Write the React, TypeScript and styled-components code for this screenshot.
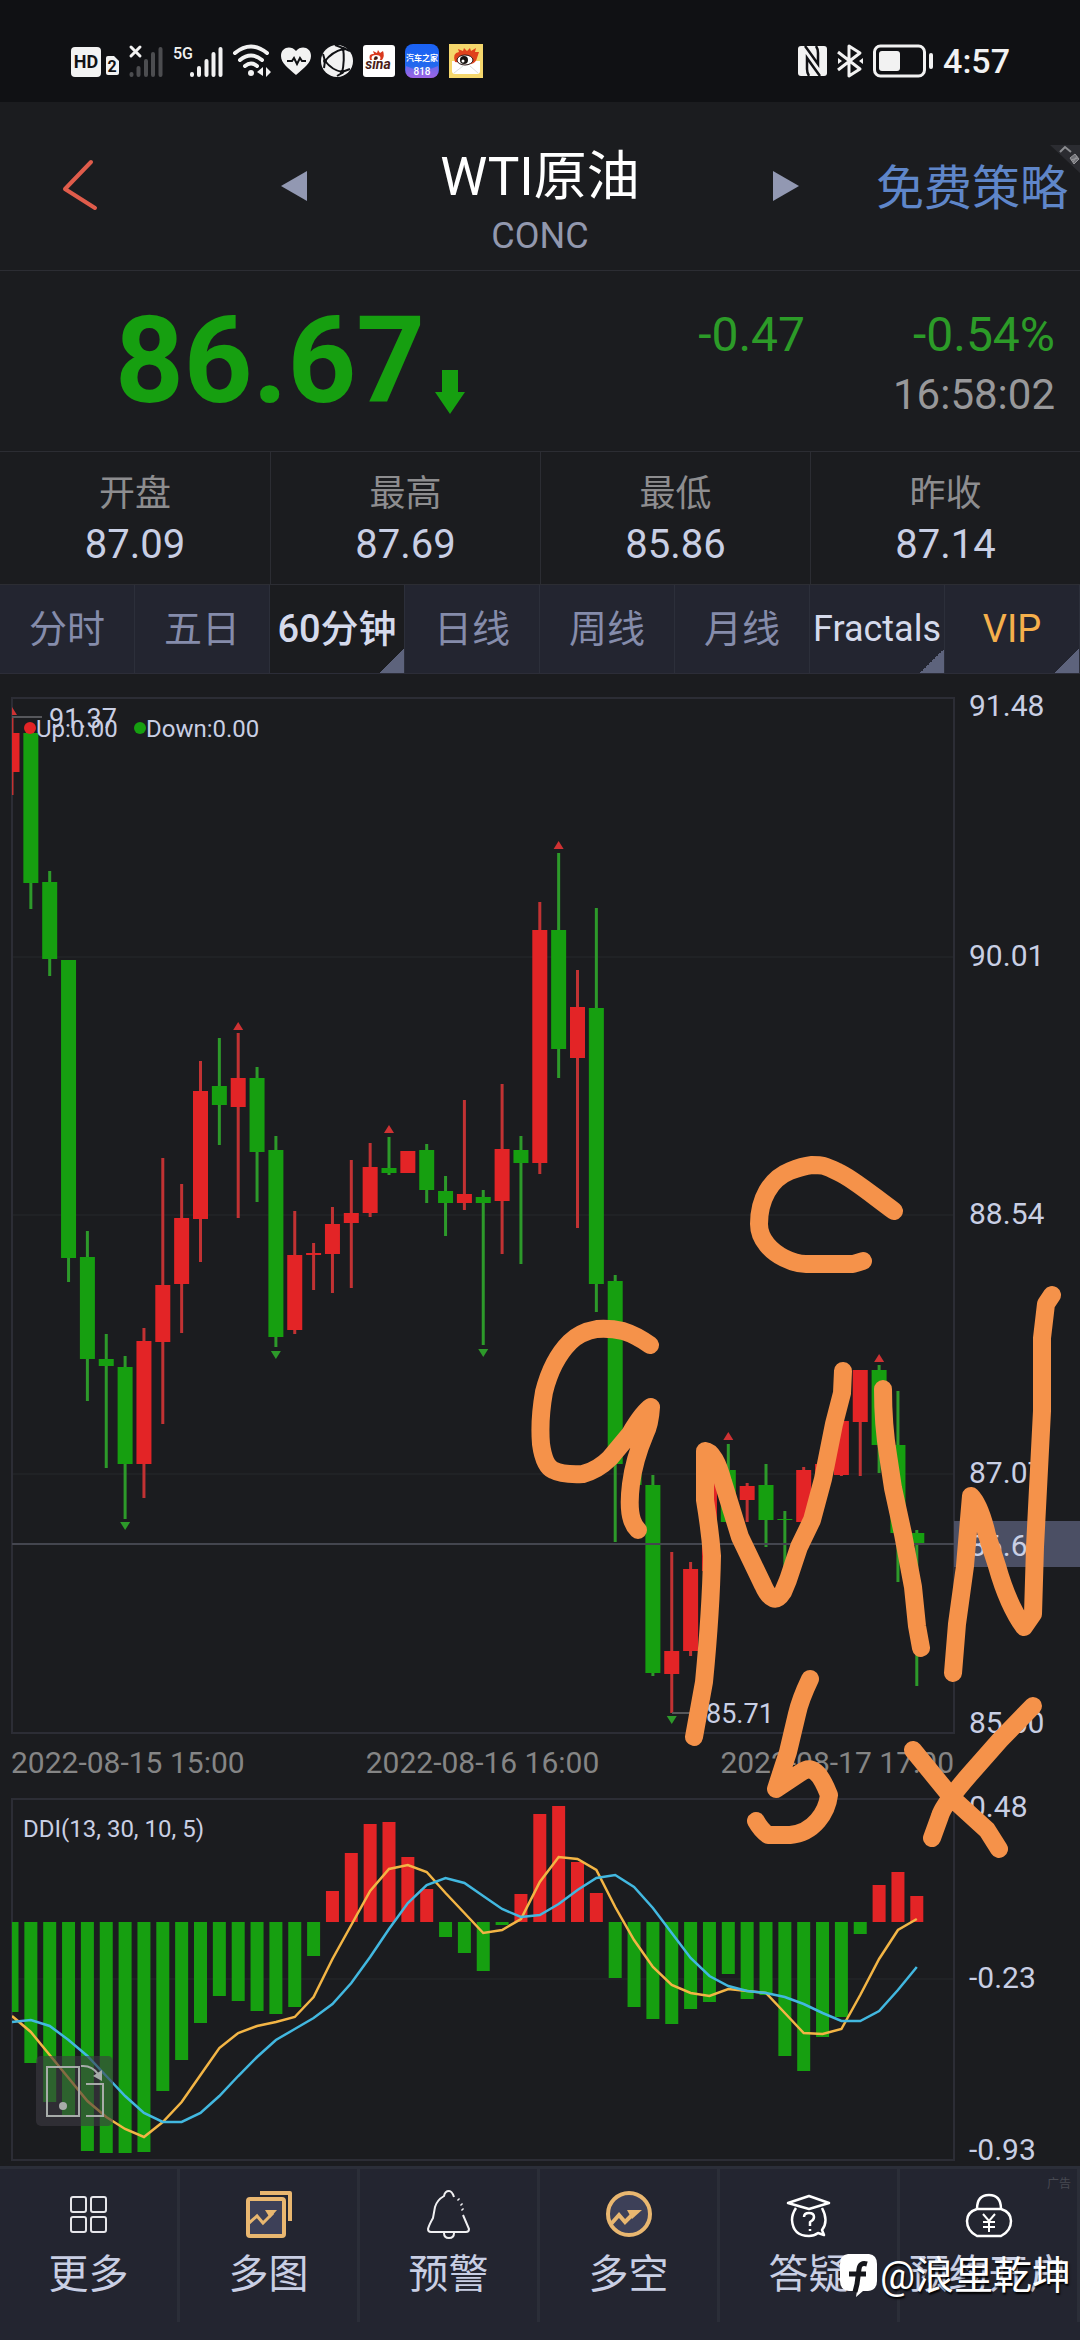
import styled, { createGlobalStyle } from "styled-components";

type Side = "up" | "down";
type Candle = [side: Side, high: number, top: number, bottom: number, low: number];
type Bar = [side: Side, end: number];

const UP = "#e32426";
const DOWN = "#169f10";
const STEP = 18.85;
const LEFT = 12;
const RIGHT = 954;
const ZERO = 1922;

const at = (index: number) => LEFT + index * STEP;

const candles: Candle[] = [
  ["up", 717, 733, 772, 795],
  ["down", 733, 733, 883, 909],
  ["down", 871, 882, 959, 976],
  ["down", 960, 960, 1258, 1282],
  ["down", 1231, 1257, 1359, 1401],
  ["down", 1334, 1359, 1366, 1468],
  ["down", 1356, 1367, 1464, 1519],
  ["up", 1328, 1341, 1464, 1498],
  ["up", 1158, 1285, 1342, 1424],
  ["up", 1184, 1218, 1284, 1333],
  ["up", 1061, 1091, 1219, 1262],
  ["down", 1038, 1086, 1105, 1145],
  ["up", 1033, 1078, 1107, 1218],
  ["down", 1067, 1078, 1152, 1202],
  ["down", 1136, 1150, 1337, 1347],
  ["up", 1211, 1255, 1330, 1334],
  ["up", 1243, 1253, 1255, 1290],
  ["up", 1207, 1224, 1254, 1293],
  ["up", 1160, 1213, 1223, 1288],
  ["up", 1143, 1167, 1213, 1217],
  ["down", 1137, 1168, 1173, 1175],
  ["up", 1151, 1151, 1173, 1173],
  ["down", 1144, 1150, 1190, 1203],
  ["down", 1176, 1191, 1203, 1236],
  ["up", 1100, 1194, 1203, 1210],
  ["down", 1190, 1197, 1203, 1345],
  ["up", 1084, 1149, 1201, 1254],
  ["down", 1136, 1150, 1163, 1264],
  ["up", 902, 930, 1163, 1174],
  ["down", 853, 930, 1049, 1078],
  ["up", 970, 1007, 1058, 1228],
  ["down", 908, 1008, 1284, 1312],
  ["down", 1275, 1281, 1464, 1542],
  ["down", 1440, 1464, 1485, 1490],
  ["down", 1475, 1485, 1673, 1676],
  ["up", 1552, 1651, 1674, 1713],
  ["up", 1562, 1569, 1651, 1656],
  ["up", 1483, 1483, 1571, 1571],
  ["down", 1444, 1470, 1522, 1522],
  ["up", 1483, 1486, 1500, 1522],
  ["down", 1464, 1485, 1520, 1547],
  ["down", 1511, 1519, 1520, 1570],
  ["up", 1467, 1470, 1522, 1522],
  ["up", 1464, 1464, 1476, 1476],
  ["up", 1421, 1421, 1475, 1476],
  ["up", 1370, 1370, 1422, 1476],
  ["down", 1365, 1370, 1445, 1473],
  ["down", 1391, 1445, 1533, 1582],
  ["down", 1530, 1533, 1544, 1686],
];

const peaks: [number, number][] = [
  [0, 711],
  [12, 1026],
  [20, 1129],
  [29, 845],
  [38, 1436],
  [46, 1358],
];
const valleys: [number, number][] = [
  [6, 1526],
  [14, 1355],
  [25, 1353],
  [35, 1720],
];

const bars: Bar[] = [
  ["down", 2012], ["down", 2063], ["down", 2102], ["down", 2117], ["down", 2151], ["down", 2153], ["down", 2153],
  ["down", 2152], ["down", 2091], ["down", 2060], ["down", 2023], ["down", 1996], ["down", 2001], ["down", 2011],
  ["down", 2014], ["down", 2007], ["down", 1956], ["up", 1891], ["up", 1853], ["up", 1824], ["up", 1822],
  ["up", 1857], ["up", 1889], ["down", 1937], ["down", 1953], ["down", 1971], ["down", 1925], ["up", 1894],
  ["up", 1814], ["up", 1806], ["up", 1862], ["up", 1893], ["down", 1978], ["down", 2007], ["down", 2019],
  ["down", 2024], ["down", 2009], ["down", 2002], ["down", 1974], ["down", 1999], ["down", 1995], ["down", 2056],
  ["down", 2071], ["down", 2037], ["down", 2017], ["down", 1934], ["up", 1885], ["up", 1872], ["up", 1896],
];

const fastLine = [
  2016, 2032, 2055, 2078, 2101, 2117, 2129, 2137, 2122, 2102, 2075, 2048, 2033, 2026, 2022, 2017, 1997, 1959, 1925,
  1891, 1869, 1865, 1872, 1893, 1913, 1933, 1930, 1919, 1882, 1857, 1859, 1870, 1907, 1940, 1967, 1985, 1993, 1996,
  1989, 1991, 1993, 2013, 2033, 2034, 2029, 1995, 1959, 1930, 1919,
];
const slowLine = [
  2022, 2020, 2026, 2040, 2056, 2076, 2096, 2113, 2122, 2122, 2113, 2096, 2076, 2057, 2040, 2029, 2018, 2004, 1983,
  1957, 1929, 1903, 1885, 1878, 1883, 1896, 1909, 1917, 1915, 1904, 1890, 1878, 1875, 1887, 1908, 1933, 1958, 1976,
  1986, 1991, 1993, 1997, 2004, 2013, 2021, 2021, 2011, 1990, 1967,
];

const toPoints = (line: number[]) => line.map((y, i) => `${at(i)},${y}`).join(" ");

const priceTicks = [
  { label: "91.48", y: 705 },
  { label: "90.01", y: 955 },
  { label: "88.54", y: 1213 },
  { label: "87.07", y: 1472 },
  { label: "85.60", y: 1722 },
];
const ddiTicks = [
  { label: "0.48", y: 1806 },
  { label: "-0.23", y: 1977 },
  { label: "-0.93", y: 2149 },
];

const strokes = [
  "M894 1211C872 1195 852 1178 838 1172C824 1165 822 1165 812 1165C804 1166 800 1167 790 1171C770 1179 759 1200 759 1224C759 1240 772 1252 784 1258Q796 1264 806 1264H853L863 1261",
  "M650 1345Q636 1335 623 1331Q610 1328 597 1329Q580 1332 570 1342Q552 1360 544 1392Q539 1420 541 1444Q544 1466 553 1470Q562 1475 583 1474Q598 1470 610 1458L630 1434Q643 1412 651 1407Q650 1424 645 1434Q634 1460 631 1484Q628 1508 632 1520Q634 1526 638 1530",
  "M694 1737L704 1682Q711 1610 712 1556Q710 1530 705 1500V1451Q715 1452 723 1482L740 1537L763 1585Q773 1608 783 1592L788 1580L799 1547L812 1520L823 1479L834 1424L842 1393L843 1371",
  "M883 1389Q883 1425 888 1455L893 1488L903 1534L913 1587L917 1626L921 1648",
  "M953 1673L957 1624L965 1566L971 1496Q980 1505 987 1535L997 1566Q1008 1605 1024 1627L1033 1614L1035 1547L1042 1411V1338L1046 1304L1052 1295",
  "M810 1679Q800 1700 797 1714L788 1752L776 1789L800 1773C812 1764 820 1772 829 1795C827 1812 814 1833 790 1835H768Q761 1830 756 1821",
  "M1033 1706L1000 1740L970 1774Q943 1805 940 1816L932 1838M913 1750L953 1799L987 1830L999 1849",
];

const stats = [
  { label: "开盘", value: "87.09" },
  { label: "最高", value: "87.69" },
  { label: "最低", value: "85.86" },
  { label: "昨收", value: "87.14" },
];

const tabs = [
  { label: "分时" },
  { label: "五日" },
  { label: "60分钟", active: true, more: true },
  { label: "日线" },
  { label: "周线" },
  { label: "月线" },
  { label: "Fractals", tone: "#d5daec", size: 36, more: true },
  { label: "VIP", tone: "#f5b04c", more: true },
];

const StatusIcons = () => (
  <S.StatusGroup>
    <svg width="48" height="34" viewBox="0 0 48 34">
      <rect x="0" y="3" width="30" height="30" rx="4" fill="#f2f2f2" />
      <text x="15" y="24" fontSize="18" fontWeight="700" textAnchor="middle" fill="#101114">
        HD
      </text>
      <path d="M35 14q0-2 2-2h6l5 5v12q0 2-2 2h-9q-2 0-2-2z" fill="#f2f2f2" />
      <text x="41" y="28" fontSize="16" fontWeight="700" textAnchor="middle" fill="#101114">
        2
      </text>
    </svg>
    <svg width="34" height="34" viewBox="0 0 34 34" strokeLinecap="round">
      <path d="M2 3l9 9M11 3l-9 9" stroke="#f2f2f2" strokeWidth="3" />
      <path d="M2.500 30v1M9.500 24v7M17 17v14M24 10v21M31.500 5v26" stroke="#4c4d50" strokeWidth="4" />
    </svg>
    <svg width="50" height="34" viewBox="0 0 50 34" strokeLinecap="round">
      <text x="0" y="15" fontSize="16" fontWeight="500" fill="#f2f2f2">
        5G
      </text>
      <path d="M19 30v1M26 24v7M33.500 17v14M40.500 10v21M47.500 5v26" stroke="#f2f2f2" strokeWidth="4" />
    </svg>
    <svg width="38" height="34" viewBox="0 0 38 34" fill="none" stroke="#f2f2f2" strokeWidth="4" strokeLinecap="round">
      <path d="M2 9Q18-4 34 9M7 16Q18 7 29 16M12 22Q18 17 24 22" />
      <circle cx="18" cy="29" r="3" fill="#f2f2f2" stroke="none" />
      <path d="M30 23v9l-6-4zM33 23v10l5-5z" fill="#f2f2f2" stroke="none" />
    </svg>
    <svg width="30" height="30" viewBox="0 0 30 30">
      <path d="M15 29C7 22 0 17 0 10 0 1 10-1 15 5 20-1 30 1 30 10 30 17 23 22 15 29z" fill="#f2f2f2" />
      <path d="M6 15h5l2-3 3 6 3-6 2 3h4" fill="none" stroke="#101114" strokeWidth="2" />
    </svg>
    <svg width="32" height="34" viewBox="0 0 32 34">
      <circle cx="16" cy="17" r="16" fill="#f2f2f2" />
      <path
        d="M14 1L22 4Q24 16 21 29L16 32M22 4L29 7M22 5Q11 8 4 17M4 17Q11 26 21 28M4 17L2 10M4 17L3 24M21 28L29 25"
        fill="none"
        stroke="#101114"
        strokeWidth="2"
      />
      <circle cx="22" cy="5" r="2" fill="#101114" />
      <circle cx="4" cy="17" r="2" fill="#101114" />
      <circle cx="21" cy="28" r="2" fill="#101114" />
    </svg>
    <svg width="32" height="34" viewBox="0 0 32 34">
      <rect y="1" width="32" height="32" rx="3" fill="#fff" />
      <path d="M7 16Q5 9 11 10L10 7 14 9 15 6 17 9 20 7Q22 12 19 16Z" fill="#d9391e" />
      <ellipse cx="13" cy="14" rx="4.500" ry="3" fill="#fff" />
      <circle cx="13" cy="14" r="1.800" fill="#3b1a14" />
      <text x="15" y="25" fontSize="14" fontWeight="700" fontStyle="italic" textAnchor="middle" fill="#4a1d18">
        sina
      </text>
    </svg>
    <svg width="34" height="34" viewBox="0 0 34 34">
      <defs>
        <linearGradient id="auto" x1="0" y1="0" x2="0" y2="1">
          <stop offset="0" stopColor="#1a62f5" />
          <stop offset="0.650" stopColor="#2369ee" />
          <stop offset="1" stopColor="#9a5ae0" />
        </linearGradient>
      </defs>
      <rect width="34" height="34" rx="8" fill="url(#auto)" />
      <path d="M1 22l10 4h12l10-4v5q0 7-8 7H9q-8 0-8-7z" fill="#a06ae8" opacity="0.600" />
      <text x="17" y="17" fontSize="8" fontWeight="700" textAnchor="middle" fill="#fff">
        汽车之家
      </text>
      <text x="17" y="31" fontSize="10" fontWeight="500" textAnchor="middle" fill="#fff">
        818
      </text>
    </svg>
    <svg width="34" height="34" viewBox="0 0 34 34">
      <rect width="34" height="34" fill="#f5d76c" />
      <path d="M3 17h28v10q0 3-3 3H6q-3 0-3-3z" fill="#fff" />
      <path d="M6 18Q3 9 10 8L9 5 14 7 15 4 18 7 21 4 22 7 27 4 26 8 30 8 28 14Q27 19 22 20z" fill="#e0421c" />
      <ellipse cx="16" cy="16" rx="8" ry="5" fill="#fff" stroke="#2a1512" />
      <circle cx="15" cy="16" r="4" fill="#16120f" />
      <circle cx="14" cy="17" r="1.500" fill="#fff" />
      <path d="M5 29l9-7M29 29l-8-7" stroke="#ddd" fill="none" />
    </svg>
  </S.StatusGroup>
);

const DeviceIcons = () => (
  <S.DeviceGroup>
    <svg width="29" height="30" viewBox="0 0 29 30" fill="none">
      <rect width="29" height="30" rx="3" fill="#f2f2f2" />
      <path d="M7 0Q10 4 20 18V7Q20 3 18 0M22 30Q19 26 9 12V23Q9 27 11 30" stroke="#101114" strokeWidth="2.500" />
    </svg>
    <svg width="26" height="34" viewBox="0 0 26 34" fill="none" stroke="#f2f2f2" strokeWidth="3">
      <path d="M1 8l22 17-11 7V2l11 7L1 26" strokeLinejoin="round" />
      <path d="M1 14v6l4-3zM26 14v6l-4-3z" fill="#f2f2f2" stroke="none" />
    </svg>
    <svg width="60" height="34" viewBox="0 0 60 34">
      <rect x="1.500" y="2" width="50" height="30" rx="6" fill="none" stroke="#f2f2f2" strokeWidth="3" />
      <rect x="6" y="7" width="21" height="20" rx="3" fill="#f2f2f2" />
      <rect x="56" y="9" width="4" height="16" rx="2" fill="#f2f2f2" />
    </svg>
    <S.Clock>4:57</S.Clock>
  </S.DeviceGroup>
);

const navItems = [
  {
    label: "更多",
    icon: (
      <g stroke="#e6e6ea" strokeWidth="2" fill="none">
        <rect x="6" y="7" width="15" height="15" rx="2" />
        <rect x="26" y="7" width="15" height="15" rx="2" />
        <rect x="6" y="27" width="15" height="15" rx="2" />
        <rect x="26" y="27" width="15" height="15" rx="2" />
      </g>
    ),
  },
  {
    label: "多图",
    icon: (
      <g stroke="#e9b770" fill="none" strokeWidth="4">
        <path d="M15 3H45V31" strokeLinejoin="round" />
        <rect x="3" y="9" width="36" height="37" rx="2" fill="#3d4058" />
        <path d="M4 33L12 26L18 33L28 23" strokeWidth="3" />
        <path d="M20 20H32L25 28z" fill="#e9b770" stroke="none" />
      </g>
    ),
  },
  {
    label: "预警",
    icon: (
      <g stroke="#f0f0f2" fill="none" strokeWidth="2">
        <path d="M29 7Q27 1 24 1Q20 1 19 6Q12 10 10 17L8 28Q4 35 3 39Q3 42 6 42H41Q44 42 44 39L38 25" />
        <path d="M19 43q0 5 5 5t5-5" />
        <path d="M33 9l1 1M36 14l1 1M37 19l1 1" strokeWidth="3" />
      </g>
    ),
  },
  {
    label: "多空",
    icon: (
      <g stroke="#e9b770" fill="none">
        <circle cx="24" cy="24" r="21" strokeWidth="4" fill="#3d4058" />
        <path d="M6 34L14 25L20 32L30 22" strokeWidth="4" />
        <path d="M22 20H37L27 29z" fill="#e9b770" stroke="none" />
      </g>
    ),
  },
  {
    label: "答疑",
    icon: (
      <g stroke="#fff" fill="none" strokeWidth="2.500" strokeLinejoin="round">
        <path d="M3 13L24 6L44 13L24 19z" />
        <path d="M11 18Q7 24 7 30Q8 46 24 46Q29 46 33 43L39 45L37 40Q44 31 37 18" />
        <path d="M19 27Q19 23 24 23Q29 23 29 27Q29 30 25 32V36M25 39v2" />
      </g>
    ),
  },
  {
    label: "预约开户",
    icon: (
      <g stroke="#fff" fill="none" strokeWidth="2.500">
        <path d="M12 19Q12 5 24 5Q36 5 36 19" />
        <path d="M12 19H36Q46 22 46 31Q46 41 36 46H12Q2 41 2 31Q2 22 12 19z" />
        <path d="M18 24L24 31L30 24M24 31V42M18 32H30M18 37H30" strokeWidth="2" />
      </g>
    ),
  },
];

const PriceChart = () => (
  <S.Chart viewBox="0 674 1080 1061" role="img" aria-label="WTI原油 60分钟">
    <defs>
      <clipPath id="price-plot">
        <rect x={LEFT} y="698" width={RIGHT - LEFT} height="1035" />
      </clipPath>
    </defs>
    <path d="M12 957H954M12 1215H954M12 1474H954" stroke="#27282c" />
    <rect x={LEFT} y="698" width={RIGHT - LEFT} height="1035" fill="none" stroke="#2c2d35" strokeWidth="2" />
    <g clipPath="url(#price-plot)">
      {candles.map(([side, high, top, bottom, low], i) => (
        <g key={i} fill={side === "up" ? UP : DOWN}>
          <rect x={at(i) - 1.5} y={high} width="3" height={low - high} fill={side === "up" ? "#c23233" : "#2d9a2a"} />
          <rect x={at(i) - 7.5} y={top} width="15" height={bottom - top} />
        </g>
      ))}
      {peaks.map(([i, y]) => (
        <path key={i} d={`M${at(i)} ${y - 4}l5 8h-10z`} fill="#cf3233" />
      ))}
      {valleys.map(([i, y]) => (
        <path key={i} d={`M${at(i)} ${y + 4}l5-8h-10z`} fill="#2d9a2a" />
      ))}
    </g>
    <path d="M12 717H42M672 1713H704" stroke="#56575b" strokeWidth="2" />
    <path d="M12 1544H954" stroke="#44464f" strokeWidth="2" />
    <g fontSize="27" fill="#c9cfe4">
      <text x="49" y="728">
        91.37
      </text>
      <text x="706" y="1723">
        85.71
      </text>
    </g>
    <g fontSize="24" fill="#c9cfe4">
      <circle cx="30" cy="728" r="6" fill={UP} />
      <text x="36" y="737">
        Up:0.00
      </text>
      <circle cx="140" cy="728" r="6" fill={DOWN} />
      <text x="146" y="737">
        Down:0.00
      </text>
    </g>
    <rect x={RIGHT} y="1521" width="126" height="46" fill="#4b4f64" />
    <g fontSize="30" fill="#c9cfe4">
      {priceTicks.map((tick) => (
        <text key={tick.label} x="969" y={tick.y + 11}>
          {tick.label}
        </text>
      ))}
      <text x="969" y="1556">
        86.67
      </text>
    </g>
  </S.Chart>
);

const DdiChart = () => (
  <S.Chart viewBox="0 1797 1080 369" role="img" aria-label="DDI">
    <defs>
      <clipPath id="ddi-plot">
        <rect x={LEFT} y="1799" width={RIGHT - LEFT} height="361" />
      </clipPath>
    </defs>
    <path d="M12 1979H954" stroke="#27282c" />
    <rect x={LEFT} y="1799" width={RIGHT - LEFT} height="361" fill="none" stroke="#2c2d35" strokeWidth="2" />
    <g clipPath="url(#ddi-plot)">
      {bars.map(([side, end], i) => (
        <rect
          key={i}
          x={at(i) - 6.5}
          y={Math.min(end, ZERO)}
          width="13"
          height={Math.abs(end - ZERO)}
          fill={side === "up" ? UP : DOWN}
        />
      ))}
      <polyline points={toPoints(fastLine)} fill="none" stroke="#f3b545" strokeWidth="2.500" />
      <polyline points={toPoints(slowLine)} fill="none" stroke="#42b8e0" strokeWidth="2.500" />
    </g>
    <text x="23" y="1837" fontSize="24" fill="#c9cfe4">
      DDI(13, 30, 10, 5)
    </text>
    <g fontSize="30" fill="#c9cfe4">
      {ddiTicks.map((tick) => (
        <text key={tick.label} x="969" y={tick.y + 11}>
          {tick.label}
        </text>
      ))}
    </g>
  </S.Chart>
);

const App = () => {
  return (
    <S.Page>
      <GlobalStyle />
      <S.StatusBar>
        <StatusIcons />
        <DeviceIcons />
      </S.StatusBar>

      <S.Header>
        <S.HeaderSide $left={60} $right={0}>
          <S.IconButton aria-label="返回">
            <svg width="40" height="54" viewBox="0 0 40 54" fill="none" stroke="#e05c4b" strokeWidth="4">
              <path d="M31 3L5 30L35 49" strokeLinecap="round" strokeLinejoin="round" />
            </svg>
          </S.IconButton>
          <S.IconButton aria-label="上一个">
            <svg width="26" height="30" viewBox="0 0 26 30" fill="#9298b2">
              <path d="M26 0V30L0 15z" />
            </svg>
          </S.IconButton>
        </S.HeaderSide>
        <S.TitleBlock>
          <S.Title>WTI原油</S.Title>
          <S.Symbol>CONC</S.Symbol>
        </S.TitleBlock>
        <S.HeaderSide $left={0} $right={12}>
          <S.IconButton aria-label="下一个">
            <svg width="26" height="30" viewBox="0 0 26 30" fill="#9298b2">
              <path d="M0 0V30L26 15z" />
            </svg>
          </S.IconButton>
          <S.StrategyLink href="#strategy">免费策略</S.StrategyLink>
        </S.HeaderSide>
        <S.CornerMark width="30" height="28" viewBox="0 0 30 28" aria-hidden="true">
          <path d="M0 0H30V28z" fill="#2b2c31" />
          <path d="M10 7l5-5 6 5" fill="none" stroke="#8b8c90" strokeWidth="2" />
          <path d="M20 13l5-4 4 5-5 5zM21 15l7-2M23 17l4-6" fill="#707176" stroke="#98989c" />
        </S.CornerMark>
      </S.Header>

      <S.Quote>
        <S.PriceBox>
          <S.Price>86.67</S.Price>
          <S.DownArrow width="30" height="44" viewBox="0 0 30 44">
            <path d="M7 0H23V22H30L15 44L0 22H7z" fill={DOWN} />
          </S.DownArrow>
        </S.PriceBox>
        <S.Changes>
          <S.Change>-0.47</S.Change>
          <S.ChangeColumn>
            <S.Change>-0.54%</S.Change>
            <S.Time>16:58:02</S.Time>
          </S.ChangeColumn>
        </S.Changes>
      </S.Quote>

      <S.Stats>
        {stats.map((stat) => (
          <S.Stat key={stat.label}>
            <S.StatLabel>{stat.label}</S.StatLabel>
            <S.StatValue>{stat.value}</S.StatValue>
          </S.Stat>
        ))}
      </S.Stats>

      <S.Tabs>
        {tabs.map((tab) => (
          <S.Tab key={tab.label} $active={tab.active} $more={tab.more} $tone={tab.tone} $size={tab.size}>
            {tab.label}
          </S.Tab>
        ))}
      </S.Tabs>

      <S.Charts>
        <PriceChart />
        <S.Dates>
          <span>2022-08-15 15:00</span>
          <span>2022-08-16 16:00</span>
          <span>2022-08-17 17:00</span>
        </S.Dates>
        <DdiChart />
        <S.RotateButton aria-label="横屏">
          <svg width="77" height="70" viewBox="0 0 77 70" fill="none" stroke="#a7aca9" strokeWidth="2">
            <rect x="11" y="11" width="32" height="49" />
            <circle cx="27" cy="50" r="4" fill="#a7aca9" stroke="none" />
            <path d="M50 28H67V60H50M45 10Q56 9 62 18" />
            <path d="M57 20L66 14L66 25z" fill="#a7aca9" stroke="none" />
          </svg>
        </S.RotateButton>
        <S.Drawing viewBox="0 674 1080 1492" aria-hidden="true">
          {strokes.map((d) => (
            <path key={d} d={d} />
          ))}
        </S.Drawing>
      </S.Charts>

      <S.Nav>
        {navItems.map((item) => (
          <S.NavItem key={item.label}>
            <svg width="48" height="50" viewBox="0 0 48 50">
              {item.icon}
            </svg>
            <span>{item.label}</span>
          </S.NavItem>
        ))}
        <S.AdTag>广告</S.AdTag>
        <S.Watermark>
          <svg width="37" height="44" viewBox="0 0 37 44">
            <path d="M8 0H29Q37 1 37 10V27Q37 36 28 37H23L16 43L17 37H9Q0 36 0 27V10Q0 1 8 0z" fill="#fff" />
            <path d="M27 10Q20 8 19 15L17 30L15 38M9 20H26" fill="none" stroke="#15161b" strokeWidth="5" />
          </svg>
          <span>@浪里乾坤</span>
        </S.Watermark>
      </S.Nav>
    </S.Page>
  );
};

const GlobalStyle = createGlobalStyle`
  * {
    box-sizing: border-box;
  }

  body {
    margin: 0;
    background: #1b1c1f;
    font-family: Roboto, "Noto Sans CJK SC", sans-serif;
  }

  button {
    padding: 0;
    border: 0;
    background: none;
    color: inherit;
    font: inherit;
    cursor: pointer;
  }

  svg {
    display: block;
    flex-shrink: 0;
    overflow: visible;
  }
`;

const S = {
  Page: styled.div`
    display: flex;
    flex-direction: column;
    min-height: 100vh;
    background: #1b1c1f;
    color: #c9cfe4;
  `,
  StatusBar: styled.div`
    display: flex;
    justify-content: space-between;
    align-items: center;
    height: 102px;
    padding: 20px 70px 0 71px;
    background: #101114;
  `,
  StatusGroup: styled.div`
    display: flex;
    align-items: center;
    gap: 10px;
  `,
  DeviceGroup: styled.div`
    display: flex;
    align-items: center;
    gap: 10px;
  `,
  Clock: styled.span`
    color: #f2f2f2;
    font-size: 34px;
    font-weight: 500;
    line-height: 34px;
  `,
  Header: styled.header`
    position: relative;
    display: grid;
    grid-template-columns: 1fr 466px 1fr;
    align-items: center;
    height: 169px;
    border-bottom: 1px solid #2c2d33;
  `,
  HeaderSide: styled.div<{ $left: number; $right: number }>`
    display: flex;
    justify-content: space-between;
    align-items: center;
    padding-left: ${({ $left }) => $left}px;
    padding-right: ${({ $right }) => $right}px;
  `,
  IconButton: styled.button`
    display: flex;
  `,
  TitleBlock: styled.div`
    padding-top: 36px;
    text-align: center;
  `,
  Title: styled.h1`
    margin: 0;
    color: #fff;
    font-size: 53px;
    font-weight: 400;
    line-height: 64px;
  `,
  Symbol: styled.div`
    color: #9298ae;
    font-size: 36px;
    line-height: 54px;
  `,
  StrategyLink: styled.a`
    padding-top: 6px;
    color: #5f86c9;
    font-size: 48px;
    line-height: 60px;
    text-decoration: none;
    white-space: nowrap;
  `,
  CornerMark: styled.svg`
    position: absolute;
    top: 43px;
    right: 0;
  `,
  Quote: styled.section`
    display: flex;
    justify-content: space-between;
    align-items: center;
    height: 181px;
    padding: 0 25px 0 115px;
    border-bottom: 1px solid #2c2d33;
  `,
  PriceBox: styled.div`
    display: flex;
    align-items: flex-end;
    gap: 10px;
  `,
  Price: styled.strong`
    color: ${DOWN};
    font-size: 120px;
    font-weight: 700;
    line-height: 120px;
  `,
  DownArrow: styled.svg`
    margin-bottom: 7px;
  `,
  Changes: styled.div`
    display: flex;
    gap: 88px;
    padding-top: 8px;
  `,
  ChangeColumn: styled.div`
    text-align: right;
  `,
  Change: styled.div`
    color: #2c9b28;
    font-size: 48px;
    line-height: 60px;
  `,
  Time: styled.div`
    color: #98989a;
    font-size: 42px;
    line-height: 60px;
  `,
  Stats: styled.dl`
    display: grid;
    grid-template-columns: repeat(4, 1fr);
    margin: 0;
    border-bottom: 1px solid #2c2d33;
  `,
  Stat: styled.div`
    height: 132px;
    padding-top: 17px;
    text-align: center;

    & + & {
      border-left: 1px solid #2c2d33;
    }
  `,
  StatLabel: styled.dt`
    color: #8d8d8f;
    font-size: 36px;
    line-height: 50px;
  `,
  StatValue: styled.dd`
    margin: 0;
    font-size: 40px;
    line-height: 52px;
  `,
  Tabs: styled.nav`
    display: grid;
    grid-template-columns: repeat(8, minmax(0, 1fr));
    height: 89px;
    border-bottom: 1px solid #2c2d38;
  `,
  Tab: styled.button<{ $active?: boolean; $more?: boolean; $tone?: string; $size?: number }>`
    border-right: 1px solid #2c2f3a;
    background-color: ${({ $active }) => ($active ? "#1b1c1f" : "#232530")};
    background-image: ${({ $more }) => ($more ? "linear-gradient(135deg, transparent 50%, #5d637c 50%)" : "none")};
    background-position: right bottom;
    background-repeat: no-repeat;
    background-size: 24px 24px;
    color: ${({ $active, $tone }) => $tone ?? ($active ? "#d5daec" : "#858cab")};
    font-size: ${({ $size }) => $size ?? 38}px;
    font-weight: ${({ $active }) => ($active ? 500 : 400)};
    line-height: 88px;
    white-space: nowrap;
  `,
  Charts: styled.main`
    position: relative;
  `,
  Chart: styled.svg`
    width: 100%;
    height: auto;
  `,
  Dates: styled.div`
    display: flex;
    justify-content: space-between;
    padding: 6px 126px 12px 11px;
    color: #858585;
    font-size: 30px;
    line-height: 44px;
  `,
  RotateButton: styled.button`
    position: absolute;
    bottom: 40px;
    left: 36px;
    border-radius: 5px;
    background: rgba(62, 58, 66, 0.6);
  `,
  Drawing: styled.svg`
    position: absolute;
    inset: 0;
    width: 100%;
    height: 100%;
    fill: none;
    stroke: #f5924a;
    stroke-width: 18px;
    stroke-linecap: round;
    stroke-linejoin: round;
    pointer-events: none;
  `,
  Nav: styled.nav`
    position: relative;
    display: grid;
    flex: 1;
    grid-template-columns: repeat(6, minmax(0, 1fr));
    align-items: start;
    border-top: 3px solid #2b2e38;
    background: #232530;
  `,
  NavItem: styled.button`
    display: flex;
    flex-direction: column;
    align-items: center;
    height: 153px;
    padding-top: 21px;
    border-right: 3px solid #2b2e38;
    font-size: 40px;
    line-height: 70px;
    white-space: nowrap;
  `,
  AdTag: styled.span`
    position: absolute;
    top: 8px;
    right: 9px;
    color: #474952;
    font-size: 12px;
    line-height: 14px;
  `,
  Watermark: styled.div`
    position: absolute;
    top: 83px;
    right: 9px;
    display: flex;
    align-items: center;
    gap: 3px;
    color: #fff;
    font-size: 39px;
    line-height: 48px;
    text-shadow: 1px 2px 2px #000;
  `,
};

export default App;
